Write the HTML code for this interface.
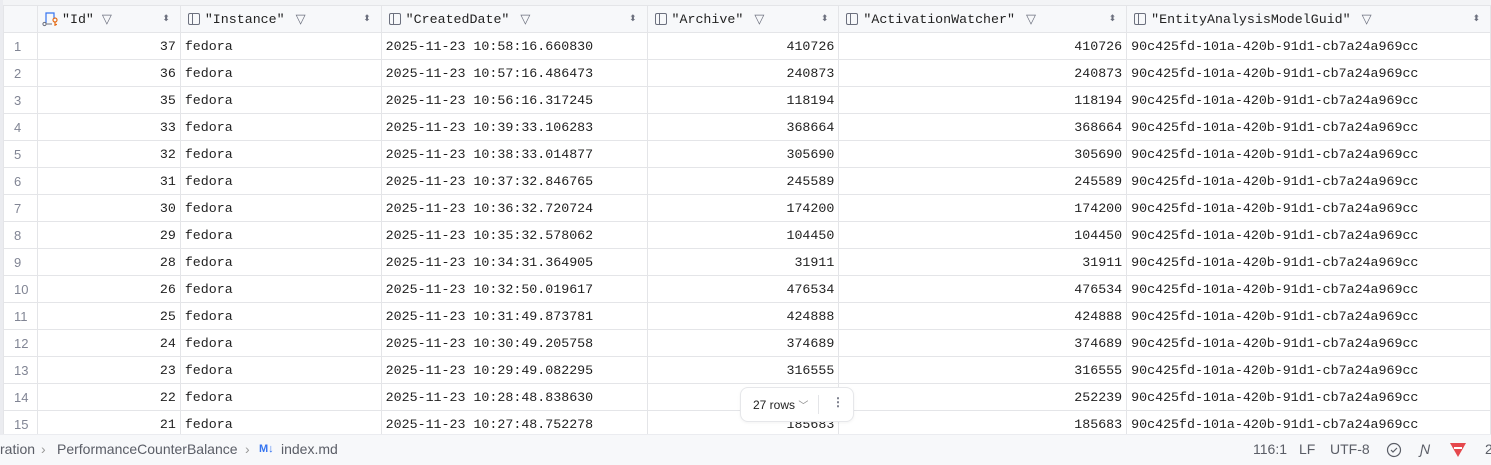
<!DOCTYPE html>
<html><head><style>
body{margin:0;width:1491px;height:464px;overflow:hidden;background:#fff;font-family:"Liberation Mono",monospace;font-size:13.3px;color:#1f1f1f;position:relative}
.top{position:absolute;left:0;top:0;width:1491px;height:5px;background:#f3f4f6}
.lstrip{position:absolute;left:0;top:0;width:3px;height:434px;background:#ebecf0}
table{position:absolute;left:3px;top:5px;border-collapse:collapse;table-layout:fixed}
td{height:26px;border:1px solid #e4e5e8;padding:0 4px;white-space:nowrap;overflow:hidden}
tr.h td{background:#f7f8fa;height:26px;color:#222}
td.n{color:#818594;text-align:left;padding-left:10px;font-family:"Liberation Sans",sans-serif;font-size:13px}
td.r{text-align:right}
.hc{display:flex;align-items:center;gap:5px}
.ic{width:12px;height:12px;border:1px solid #6c707e;border-radius:2px;position:relative;box-sizing:border-box;margin-left:3px}
.ic:after{content:"";position:absolute;left:3px;top:0;bottom:0;border-left:1px solid #6c707e}
.f{color:#6c707e;font-family:"DejaVu Sans",sans-serif;font-size:13px;margin-left:6px}
.s{margin-left:auto;color:#6c707e;font-size:9px;font-family:"DejaVu Sans",sans-serif;margin-right:6px}
.status{position:absolute;left:0;top:434px;width:1491px;height:30px;background:#f7f8fa;font-family:"Liberation Sans",sans-serif;font-size:14px;color:#5a5d66;border-top:1px solid #ebecf0}
.status span{position:absolute;top:6px}
.pill{position:absolute;left:740px;top:387px;width:112px;height:33px;background:#fff;border:1px solid #e6e7ea;border-radius:8px;font-family:"Liberation Sans",sans-serif;font-size:12px;box-shadow:0 1px 3px rgba(0,0,0,.05)}
</style></head><body>
<div class="top"></div><div class="lstrip"></div>
<table>
<colgroup><col style="width:34px"><col style="width:143px"><col style="width:201px"><col style="width:266px"><col style="width:192px"><col style="width:288px"><col style="width:364px"></colgroup>
<tr class="h"><td></td>
<td><div class="hc" style="gap:2px"><svg width="18" height="16" viewBox="0 0 18 16"><path d="M4 12V2h8v6" fill="none" stroke="#3574f0" stroke-width="1.2"/><circle cx="2.5" cy="13" r="1.6" fill="none" stroke="#6c707e"/><path d="M4 13h6" stroke="#6c707e"/><circle cx="13" cy="9" r="2" fill="none" stroke="#e66d17" stroke-width="1.2"/><path d="M13 11v4M13 13.5h2" stroke="#e66d17" stroke-width="1.2"/></svg><span>"Id"</span><span class="f">▽</span><span class="s">⬍</span></div></td>
<td><div class="hc"><div class="ic"></div><span>"Instance"</span><span class="f">▽</span><span class="s">⬍</span></div></td>
<td><div class="hc"><div class="ic"></div><span>"CreatedDate"</span><span class="f">▽</span><span class="s">⬍</span></div></td>
<td><div class="hc"><div class="ic"></div><span>"Archive"</span><span class="f">▽</span><span class="s">⬍</span></div></td>
<td><div class="hc"><div class="ic"></div><span>"ActivationWatcher"</span><span class="f">▽</span><span class="s">⬍</span></div></td>
<td><div class="hc"><div class="ic"></div><span>"EntityAnalysisModelGuid"</span><span class="f">▽</span><span class="s">⬍</span></div></td>
</tr>
<tr><td class="n">1</td><td class="r">37</td><td>fedora</td><td>2025-11-23 10:58:16.660830</td><td class="r">410726</td><td class="r">410726</td><td>90c425fd-101a-420b-91d1-cb7a24a969cc</td></tr>
<tr><td class="n">2</td><td class="r">36</td><td>fedora</td><td>2025-11-23 10:57:16.486473</td><td class="r">240873</td><td class="r">240873</td><td>90c425fd-101a-420b-91d1-cb7a24a969cc</td></tr>
<tr><td class="n">3</td><td class="r">35</td><td>fedora</td><td>2025-11-23 10:56:16.317245</td><td class="r">118194</td><td class="r">118194</td><td>90c425fd-101a-420b-91d1-cb7a24a969cc</td></tr>
<tr><td class="n">4</td><td class="r">33</td><td>fedora</td><td>2025-11-23 10:39:33.106283</td><td class="r">368664</td><td class="r">368664</td><td>90c425fd-101a-420b-91d1-cb7a24a969cc</td></tr>
<tr><td class="n">5</td><td class="r">32</td><td>fedora</td><td>2025-11-23 10:38:33.014877</td><td class="r">305690</td><td class="r">305690</td><td>90c425fd-101a-420b-91d1-cb7a24a969cc</td></tr>
<tr><td class="n">6</td><td class="r">31</td><td>fedora</td><td>2025-11-23 10:37:32.846765</td><td class="r">245589</td><td class="r">245589</td><td>90c425fd-101a-420b-91d1-cb7a24a969cc</td></tr>
<tr><td class="n">7</td><td class="r">30</td><td>fedora</td><td>2025-11-23 10:36:32.720724</td><td class="r">174200</td><td class="r">174200</td><td>90c425fd-101a-420b-91d1-cb7a24a969cc</td></tr>
<tr><td class="n">8</td><td class="r">29</td><td>fedora</td><td>2025-11-23 10:35:32.578062</td><td class="r">104450</td><td class="r">104450</td><td>90c425fd-101a-420b-91d1-cb7a24a969cc</td></tr>
<tr><td class="n">9</td><td class="r">28</td><td>fedora</td><td>2025-11-23 10:34:31.364905</td><td class="r">31911</td><td class="r">31911</td><td>90c425fd-101a-420b-91d1-cb7a24a969cc</td></tr>
<tr><td class="n">10</td><td class="r">26</td><td>fedora</td><td>2025-11-23 10:32:50.019617</td><td class="r">476534</td><td class="r">476534</td><td>90c425fd-101a-420b-91d1-cb7a24a969cc</td></tr>
<tr><td class="n">11</td><td class="r">25</td><td>fedora</td><td>2025-11-23 10:31:49.873781</td><td class="r">424888</td><td class="r">424888</td><td>90c425fd-101a-420b-91d1-cb7a24a969cc</td></tr>
<tr><td class="n">12</td><td class="r">24</td><td>fedora</td><td>2025-11-23 10:30:49.205758</td><td class="r">374689</td><td class="r">374689</td><td>90c425fd-101a-420b-91d1-cb7a24a969cc</td></tr>
<tr><td class="n">13</td><td class="r">23</td><td>fedora</td><td>2025-11-23 10:29:49.082295</td><td class="r">316555</td><td class="r">316555</td><td>90c425fd-101a-420b-91d1-cb7a24a969cc</td></tr>
<tr><td class="n">14</td><td class="r">22</td><td>fedora</td><td>2025-11-23 10:28:48.838630</td><td class="r">252239</td><td class="r">252239</td><td>90c425fd-101a-420b-91d1-cb7a24a969cc</td></tr>
<tr><td class="n">15</td><td class="r">21</td><td>fedora</td><td>2025-11-23 10:27:48.752278</td><td class="r">185683</td><td class="r">185683</td><td>90c425fd-101a-420b-91d1-cb7a24a969cc</td></tr>
</table>
<div class="pill"><span style="position:absolute;left:12px;top:9px;color:#222">27 rows <span style="color:#888;font-size:10px">﹀</span></span><span style="position:absolute;left:77px;top:7px;height:19px;border-left:1px solid #e4e5e8"></span><span style="position:absolute;left:91px;top:7px;color:#6c707e;font-weight:bold">⋮</span></div>
<div class="status">
<span style="left:0">ration</span><span style="left:41px;color:#999">›</span><span style="left:57px">PerformanceCounterBalance</span><span style="left:245px;color:#999">›</span><span style="left:259px;color:#3574f0;font-weight:bold;font-size:11px;top:8px">M↓</span><span style="left:281px">index.md</span>
<span style="left:1253px">116:1</span><span style="left:1299px">LF</span><span style="left:1330px">UTF-8</span>
<svg style="position:absolute;left:1386px;top:7px" width="16" height="16" viewBox="0 0 16 16"><circle cx="8" cy="8" r="6.5" fill="none" stroke="#5a5d66" stroke-width="1.2"/><path d="M5 8l2 2 4-4" fill="none" stroke="#5a5d66" stroke-width="1.2"/></svg>
<span style="left:1420px;font-style:italic">Ɲ</span>
<svg style="position:absolute;left:1450px;top:8px" width="16" height="14" viewBox="0 0 16 14"><path d="M0 0h16L8 14z" fill="#e5484d"/><rect x="4" y="4" width="8" height="2" fill="#fff"/></svg>
<span style="left:1485px">2</span>
</div>
</body></html>
